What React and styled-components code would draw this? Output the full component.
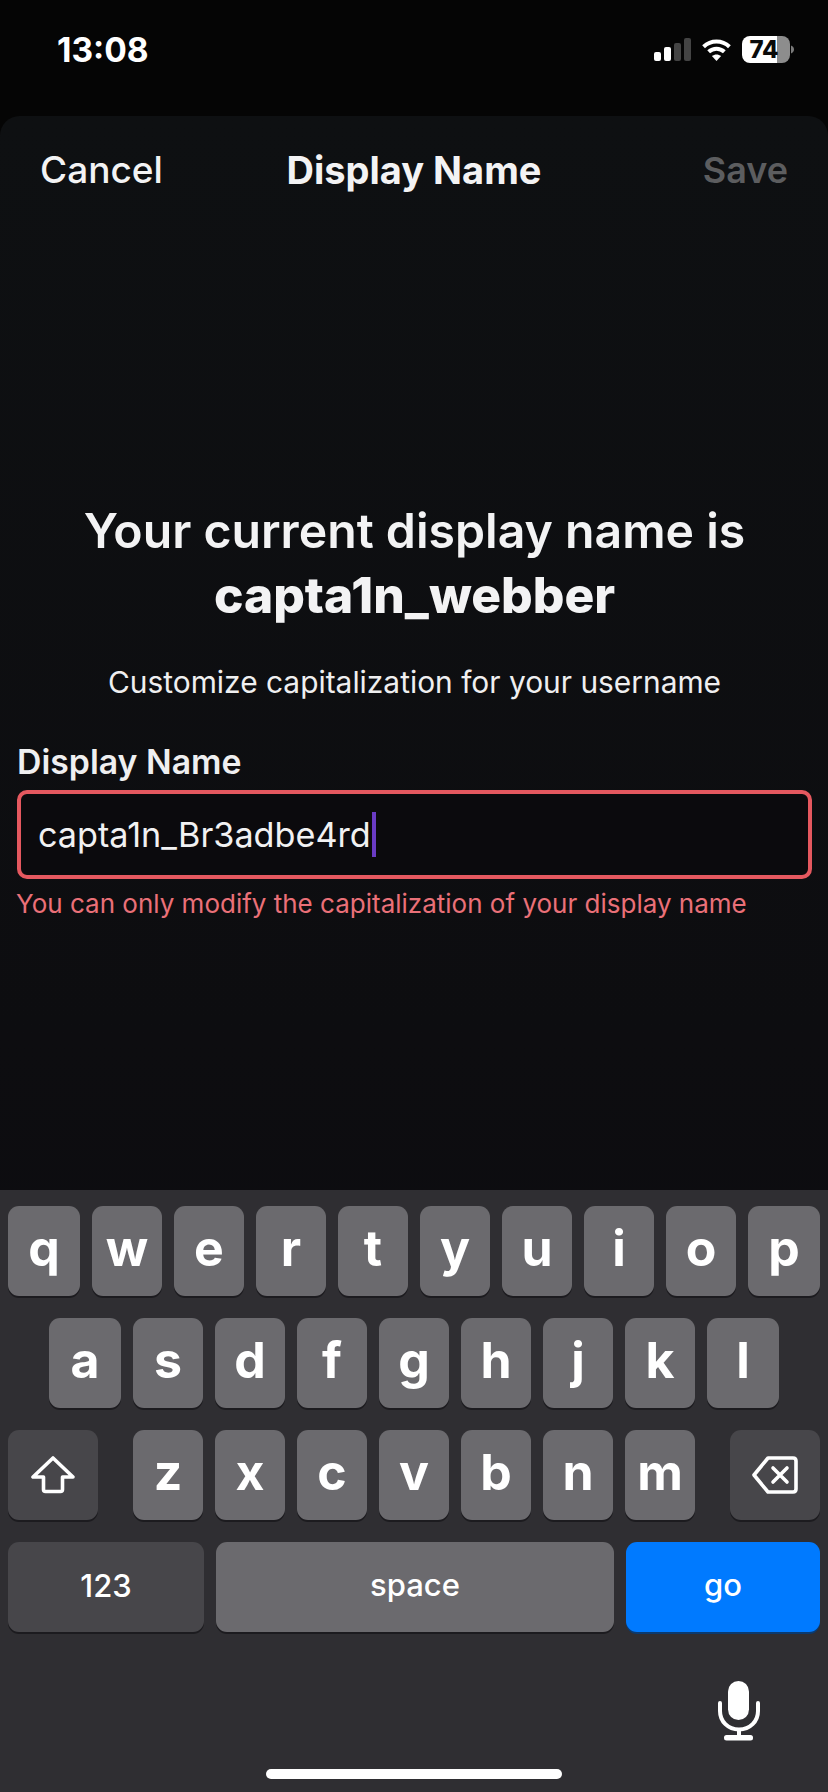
import React from "react";
import styled, { createGlobalStyle } from "styled-components";

const Global = createGlobalStyle`
  html, body { margin: 0; padding: 0; background: #050505; }
  * { box-sizing: border-box; }
  body { font-family: Inter, "Noto Sans", sans-serif; }
`;

const Screen = styled.div`
  width: 828px;
  height: 1792px;
  display: flex;
  flex-direction: column;
  background: #050505;
  color: #f4f4f5;
  overflow: hidden;
`;

const StatusBar = styled.div`
  height: 116px;
  flex: none;
  display: flex;
  justify-content: space-between;
  align-items: flex-start;
  padding: 31px 34px 0 57px;
`;

const Time = styled.div`
  font-size: 33.5px;
  line-height: 38px;
  font-weight: 700;
  color: #fff;
`;

const StatusIcons = styled.div`
  display: flex;
  align-items: center;
  gap: 10px;
  margin-top: 5px;
`;

const BatteryWrap = styled.div`
  position: relative;
  width: 52px;
  height: 27px;
`;

const BatteryText = styled.span`
  position: absolute;
  left: 2px;
  width: 40px;
  top: 0;
  text-align: center;
  font-size: 24px;
  line-height: 27px;
  font-weight: 800;
  color: #0a0a0a;
`;

const Sheet = styled.div`
  flex: 1;
  display: flex;
  flex-direction: column;
  border-radius: 20px 20px 0 0;
  background: linear-gradient(#0e1012 0%, #0d0d10 55%, #0c0a10 100%);
`;

const NavBar = styled.div`
  display: flex;
  justify-content: space-between;
  align-items: center;
  padding: 37px 40px 0 40px;
  height: 70px;
  position: relative;
`;

const NavSide = styled.span`
  font-size: ${(p) => (p.$muted ? 36 : 37)}px;
  font-weight: ${(p) => (p.$muted ? 600 : 500)};
  color: ${(p) => (p.$muted ? "#5c5d5f" : "#f3f3f4")};
`;

const NavTitle = styled.span`
  font-size: 38px;
  font-weight: 700;
  color: #f3f3f4;
  position: absolute;
  left: 0;
  right: 0;
  bottom: -2px;
  text-align: center;
  line-height: 36px;
`;

const Body = styled.div`
  display: flex;
  flex-direction: column;
  padding: 313px 16px 0 17px;
`;

const Heading = styled.h1`
  margin: 0;
  text-align: center;
  font-size: 48.2px;
  line-height: 64px;
  font-weight: 600;
  color: #f3f3f4;
`;

const Strong = styled.strong`
  font-size: 49.7px;
  font-weight: 800;
  display: block;
`;

const Sub = styled.p`
  margin: 37px 0 0;
  text-align: center;
  font-size: 29.9px;
  line-height: 36px;
  font-weight: 400;
  color: #efeff0;
`;

const Label = styled.label`
  margin-top: 42px;
  font-size: 33.8px;
  line-height: 40px;
  font-weight: 600;
  color: #efeff0;
`;

const Field = styled.div`
  margin-top: 8px;
  height: 89px;
  border: 4px solid #e5585f;
  border-radius: 10px;
  display: flex;
  align-items: center;
  padding-left: 17px;
  font-size: 34.2px;
  color: #f1f1f2;
  background: #0b0a0d;
`;

const Caret = styled.span`
  display: inline-block;
  width: 4px;
  height: 45px;
  background: #6a3bc4;
  margin-left: 1px;
`;

const ErrorText = styled.div`
  margin-top: 7px;
  margin-left: -1px;
  font-size: 26px;
  line-height: 36px;
  color: #ea7078;
`;

const Keyboard = styled.div`
  height: 602px;
  flex: none;
  margin-top: auto;
  background: #2f2e32;
  padding: 16px 8px 0;
  display: flex;
  flex-direction: column;
  gap: 22px;
  position: relative;
`;

const KeyRow = styled.div`
  display: flex;
  gap: 12px;
  justify-content: ${(p) => p.$justify || "center"};
`;

const LetterGroup = styled.div`
  display: flex;
  gap: 12px;
`;

const Key = styled.div`
  width: ${(p) => p.$w || 70}px;
  height: 90px;
  flex: none;
  border-radius: 11px;
  display: flex;
  align-items: center;
  justify-content: center;
  color: #fff;
  background: ${(p) => (p.$tone === "dark" ? "#47464a" : p.$tone === "blue" ? "#007aff" : "#6b6a6e")};
  box-shadow: 0 2px 0 ${(p) => (p.$tone === "blue" ? "#0b3a70" : "#1c1b1f")};
  font-size: ${(p) => p.$size || 50}px;
  font-weight: ${(p) => p.$weight || 700};
  padding-bottom: ${(p) => p.$pb || 0}px;
`;

const MicRow = styled.div`
  display: flex;
  justify-content: flex-end;
  padding: 27px 60px 0 0;
`;

const HomeBar = styled.div`
  position: absolute;
  left: 266px;
  bottom: 13px;
  width: 296px;
  height: 10px;
  border-radius: 5px;
  background: #fff;
`;

const Signal = () => (
  <svg width="37" height="23" viewBox="0 0 37 23">
    <rect x="0" y="14" width="7" height="9" rx="2" fill="#fff" />
    <rect x="10" y="9" width="7" height="14" rx="2" fill="#fff" />
    <rect x="20" y="5" width="7" height="18" rx="2" fill="#444" />
    <rect x="30" y="0" width="7" height="23" rx="2" fill="#444" />
  </svg>
);

const Wifi = () => (
  <svg width="31" height="24" viewBox="0 0 32 26" fill="none" stroke="#fff" strokeWidth="4.4">
    <path d="M2 9.5C10 2 22 2 30 9.5" />
    <path d="M7.5 15c5-4.6 12-4.6 17 0" />
    <path d="M16 25l-5-5.400c3-2.300 7-2.300 10 0z" fill="#fff" stroke="none" />
  </svg>
);

const Battery = () => (
  <BatteryWrap>
    <svg width="52" height="27" viewBox="0 0 52 27">
      <defs>
        <clipPath id="batt">
          <rect x="0" y="0" width="48" height="27" rx="8" />
        </clipPath>
      </defs>
      <g clipPath="url(#batt)">
        <rect x="0" y="0" width="35" height="27" fill="#fff" />
        <rect x="35" y="0" width="13" height="27" fill="#8d8d8d" />
      </g>
      <path d="M49 9.500c2 .8 3 2.200 3 4s-1 3.200-3 4z" fill="#7a7a7a" />
    </svg>
    <BatteryText>74</BatteryText>
  </BatteryWrap>
);

const Shift = () => (
  <svg width="44" height="38" viewBox="0 0 44 38" fill="none" stroke="#fff" strokeWidth="3.6" strokeLinejoin="round">
    <path d="M22 2L2 21h10.500v12.500c0 1.200.8 2 2 2h15c1.200 0 2-.8 2-2V21H42z" />
  </svg>
);

const Backspace = () => (
  <svg width="46" height="38" viewBox="0 0 46 38" fill="none" stroke="#fff" strokeWidth="3.6" strokeLinejoin="round" strokeLinecap="round">
    <path d="M16 2h25c1.800 0 3 1.200 3 3v28c0 1.800-1.200 3-3 3H16L2 19z" />
    <path d="M21 12l14 14M35 12L21 26" />
  </svg>
);

const Mic = () => (
  <svg width="42" height="60" viewBox="0 0 42 60" fill="none">
    <rect x="10" y="0" width="21" height="39" rx="10.500" fill="#fff" />
    <path d="M2 22v8c0 10.500 8 18.500 19 18.500S40 40.500 40 30v-8" stroke="#fff" strokeWidth="4" strokeLinecap="round" />
    <path d="M21 48v9" stroke="#fff" strokeWidth="4" />
    <rect x="6" y="54" width="29" height="5.500" rx="2.500" fill="#fff" />
  </svg>
);

export default function App() {
  return (
    <>
      <Global />
      <Screen>
        <StatusBar>
          <Time>13:08</Time>
          <StatusIcons>
            <Signal />
            <Wifi />
            <Battery />
          </StatusIcons>
        </StatusBar>
        <Sheet>
          <NavBar>
            <NavSide>Cancel</NavSide>
            <NavTitle>Display Name</NavTitle>
            <NavSide $muted>Save</NavSide>
          </NavBar>
          <Body>
            <Heading>
              Your current display name is
              <Strong>capta1n_webber</Strong>
            </Heading>
            <Sub>Customize capitalization for your username</Sub>
            <Label>Display Name</Label>
            <Field>
              capta1n_Br3adbe4rd
              <Caret />
            </Field>
            <ErrorText>You can only modify the capitalization of your display name</ErrorText>
          </Body>
          <Keyboard>
            <KeyRow>
              {"qwertyuiop".split("").map((c, i) => (
                <Key key={c} $w={i === 0 || i === 9 ? 72 : 70} $pb={6}>{c}</Key>
              ))}
            </KeyRow>
            <KeyRow>
              {"asdfghjkl".split("").map((c, i) => (
                <Key key={c} $w={i === 0 || i === 8 ? 72 : 70} $pb={6}>{c}</Key>
              ))}
            </KeyRow>
            <KeyRow $justify="space-between">
              <Key $w={90} $tone="dark"><Shift /></Key>
              <LetterGroup>
                {"zxcvbnm".split("").map((c) => (
                  <Key key={c} $pb={6}>{c}</Key>
                ))}
              </LetterGroup>
              <Key $w={90} $tone="dark"><Backspace /></Key>
            </KeyRow>
            <KeyRow>
              <Key $w={196} $tone="dark" $size={31} $weight={500} $pb={4}>123</Key>
              <Key $w={398} $size={31} $weight={500} $pb={6}>space</Key>
              <Key $w={194} $tone="blue" $size={31} $weight={500} $pb={6}>go</Key>
            </KeyRow>
            <MicRow><Mic /></MicRow>
            <HomeBar />
          </Keyboard>
        </Sheet>
      </Screen>
    </>
  );
}
